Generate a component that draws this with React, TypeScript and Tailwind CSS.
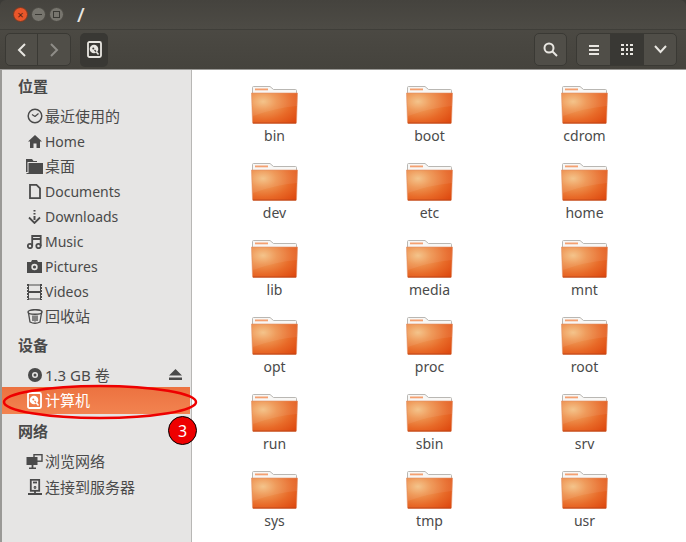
import React from "react";

const font = { fontFamily: '"Noto Sans", "Noto Sans CJK SC", sans-serif' };

const folders = [
  "bin", "boot", "cdrom",
  "dev", "etc", "home",
  "lib", "media", "mnt",
  "opt", "proc", "root",
  "run", "sbin", "srv",
  "sys", "tmp", "usr",
];

function Folder() {
  return (
    <svg width="47" height="38" viewBox="0 0 47 38">
      <path d="M1.500 10V1.500Q1.500 .5 2.500 .5H19l3.500 3H44.500Q45.500 3.500 45.500 4.500V10Z" fill="#f8f7f5" stroke="#b9b7b3" />
      <rect x="4" y="2.500" width="13" height="1.800" fill="#f4a070" />
      <path d="M0.500 7H46.500L45.500 36.500Q45.500 37.500 44.500 37.500H2.500Q1.500 37.500 1.500 36.500Z" fill="url(#folderFill)" stroke="#e3946c" strokeWidth="0.600" />
      <path d="M1 7.500H46V20Q24 22 2 30Z" fill="#ffffff" opacity="0.07" />
      <path d="M2 37H45" stroke="#b8431a" strokeWidth="0.800" />
    </svg>
  );
}

function DiskIcon({ color = "#4c4c4c", hole = "#e6e5e4" }: { color?: string; hole?: string }) {
  return (
    <svg width="15" height="17" viewBox="0 0 15 17">
      <rect x="1" y="1" width="13" height="15" rx="1.500" fill={hole} stroke={color} strokeWidth="1.800" />
      <circle cx="7" cy="8" r="4.300" fill={color} />
      <circle cx="6.300" cy="7.500" r="1" fill={hole} />
      <path d="M7.500 9L11 13" stroke={hole} strokeWidth="1.200" />
      <path d="M9 10.500l2.500 3" stroke={color} strokeWidth="1.500" />
    </svg>
  );
}

const c = "#4a4a4a";
const icons: Record<string, React.ReactNode> = {
  recent: (
    <svg width="16" height="16" viewBox="0 0 16 16" fill="none" stroke={c} strokeWidth="1.500">
      <circle cx="8" cy="8" r="6.800" />
      <path d="M8 8.500L5 6.500M8 8.500l3.500-3" strokeWidth="1.200" />
    </svg>
  ),
  home: (
    <svg width="14" height="13" viewBox="0 0 14 13" fill={c}>
      <path d="M7 0L14 6.500H12V13H8.500V8.500H5.500V13H2V6.500H0Z" />
    </svg>
  ),
  desktop: (
    <svg width="17" height="15" viewBox="0 0 17 15" fill={c}>
      <path d="M0 0H6L7.500 2H11V3H1.500V13H0Z" />
      <path d="M2.500 4H17V15H0.500V14H2.500Z" />
    </svg>
  ),
  doc: (
    <svg width="12" height="15" viewBox="0 0 12 15" fill="none" stroke={c} strokeWidth="1.800">
      <path d="M1 .9H7.500L11 4.300V14.100H1Z" />
    </svg>
  ),
  download: (
    <svg width="13" height="14" viewBox="0 0 13 14" fill="none" stroke={c} strokeWidth="2">
      <path d="M6.500 0v1.500M6.500 3v1.500M6.500 6v4" />
      <path d="M1 7.500L6.500 13 12 7.500" strokeWidth="1.800" />
    </svg>
  ),
  music: (
    <svg width="15" height="14" viewBox="0 0 15 14" fill="none" stroke={c} strokeWidth="1.800">
      <circle cx="3" cy="11" r="2.200" />
      <circle cx="11.500" cy="11" r="2.200" />
      <path d="M5.200 11V1H13.700V11M5.200 4H13.700" />
    </svg>
  ),
  camera: (
    <svg width="15" height="13" viewBox="0 0 15 13">
      <path d="M0 2H4L5 0H10L11 2H15V13H0Z" fill={c} />
      <circle cx="7.500" cy="7" r="3.200" fill="#e6e5e4" />
      <circle cx="7.500" cy="7" r="1.600" fill={c} />
    </svg>
  ),
  video: (
    <svg width="15" height="16" viewBox="0 0 15 16" fill="none" stroke={c}>
      <path d="M1.500 0V16M13.500 0V16M2 1H13M2 7.500H13M2 8.500H13M2 15H13" />
      <path d="M.5 0V16M14.500 0V16" strokeDasharray="2 1" />
    </svg>
  ),
  trash: (
    <svg width="16" height="15" viewBox="0 0 16 15" fill="none" stroke={c} strokeWidth="1.500">
      <ellipse cx="8" cy="3" rx="7" ry="2.300" />
      <path d="M1.500 4L3 13Q8 15.500 13 13L14.500 4M6 6.500V12M8 6.500V12.500M10 6.500V12" strokeWidth="1.300" />
    </svg>
  ),
  disc: (
    <svg width="14" height="14" viewBox="0 0 14 14">
      <circle cx="7" cy="7" r="7" fill={c} />
      <circle cx="7" cy="7" r="3" fill="#e6e5e4" />
      <circle cx="7" cy="7" r="1.500" fill={c} />
    </svg>
  ),
  network: (
    <svg width="17" height="15" viewBox="0 0 17 15">
      <rect x="8" y="0.700" width="8" height="6.500" fill="none" stroke={c} strokeWidth="1.400" />
      <rect x="0.500" y="3" width="11" height="8" fill={c} />
      <path d="M3 14.500H10M6.500 11V14" stroke={c} strokeWidth="1.800" />
    </svg>
  ),
  server: (
    <svg width="14" height="16" viewBox="0 0 14 16" fill="none" stroke={c} strokeWidth="1.800">
      <rect x="2.800" y="0.800" width="8.400" height="11" />
      <path d="M5 3.500H9" />
      <circle cx="7" cy="8.500" r="0.500" />
      <path d="M0 15H14M7 12V15" />
    </svg>
  ),
};

function Heading({ label, className }: { label: string; className: string }) {
  return (
    <div className={`pl-[16px] flex items-center text-[15px] font-bold text-[#4a4a4a] ${className}`}>
      {label}
    </div>
  );
}

function Place({ icon, label, className = "h-[25px] text-[14px]" }: { icon: string; label: string; className?: string }) {
  return (
    <div className={`flex items-center text-[#4a4a4a] ${className}`}>
      <span className="w-[19px] ml-[23px] mr-[1px] flex justify-center">{icons[icon]}</span>
      <span>{label}</span>
    </div>
  );
}

export default function App() {
  return (
    <div className="w-[686px] h-[542px] relative overflow-hidden flex flex-col bg-[#3c3b37]" style={font}>
      <svg width="0" height="0" className="absolute">
        <defs>
          <radialGradient id="folderFill" cx="0.25" cy="0.28" r="0.95">
            <stop offset="0" stopColor="#f4c083" />
            <stop offset="0.3" stopColor="#ee9450" />
            <stop offset="0.65" stopColor="#e86a28" />
            <stop offset="1" stopColor="#de4a10" />
          </radialGradient>
        </defs>
      </svg>

      <div className="h-[29px] shrink-0 flex items-center pl-[13px] rounded-t-md bg-gradient-to-b from-[#45433e] to-[#4d4b45]">
        <span className="w-[15px] h-[15px] rounded-full bg-[#e9562a] border border-[#7a3a22] flex items-center justify-center text-[11px] leading-none text-[#5a2010]">×</span>
        <span className="w-[15px] h-[15px] ml-[3px] rounded-full bg-[#77756e] border border-[#4a4842] flex items-center justify-center">
          <span className="w-[7px] h-[1.500px] bg-[#3a3934]" />
        </span>
        <span className="w-[15px] h-[15px] ml-[3px] rounded-full bg-[#77756e] border border-[#4a4842] flex items-center justify-center">
          <span className="w-[7px] h-[7px] border border-[#3a3934]" />
        </span>
        <span className="ml-[13px] text-[20px] leading-none font-medium text-[#e8e6e1]">/</span>
      </div>

      <div className="h-[40px] shrink-0 flex items-center px-[5px] border-t border-[#3f3e39] bg-gradient-to-b from-[#4b4943] to-[#45433d]">
        <div className="w-[66px] h-[33px] flex rounded-[5px] border border-[#3a3934] bg-[#504e48]">
          <span className="w-[32px] flex items-center justify-center border-r border-[#3a3934]">
            <svg width="12" height="14" viewBox="0 0 12 14" fill="none" stroke="#e8e6e1" strokeWidth="2"><path d="M9 1L3 7l6 6" /></svg>
          </span>
          <span className="flex-1 flex items-center justify-center">
            <svg width="12" height="14" viewBox="0 0 12 14" fill="none" stroke="#8f8d88" strokeWidth="2"><path d="M3 1l6 6-6 6" /></svg>
          </span>
        </div>
        <div className="w-[28px] h-[34px] ml-[9px] rounded-[5px] bg-[#393834] flex items-center justify-center">
          <DiskIcon color="#e8e6e1" hole="#393834" />
        </div>
        <div className="w-[33px] h-[33px] ml-auto rounded-[5px] border border-[#3a3934] bg-[#504e48] flex items-center justify-center">
          <svg width="15" height="15" viewBox="0 0 15 15" fill="none" stroke="#e8e6e1" strokeWidth="2"><circle cx="6" cy="6" r="4.500" /><path d="M9.500 9.500L14 14" /></svg>
        </div>
        <div className="w-[101px] h-[33px] ml-[9px] mr-[4px] flex rounded-[5px] border border-[#3a3934] bg-[#504e48] overflow-hidden">
          <span className="w-[33px] flex items-center justify-center">
            <span className="w-[10px] h-[10px] border-y-2 border-[#e8e6e1] flex items-center"><span className="w-full h-[2px] bg-[#e8e6e1]" /></span>
          </span>
          <span className="w-[34px] bg-[#393834] grid grid-cols-[3px_3px_3px] auto-rows-[3px] gap-[1.500px] place-content-center">
            {Array.from({ length: 9 }).map((_, i) => (
              <span key={i} className="w-[2.500px] h-[2.500px] bg-[#e8e6e1]" />
            ))}
          </span>
          <span className="flex-1 flex items-center justify-center">
            <svg width="13" height="9" viewBox="0 0 13 9" fill="none" stroke="#e8e6e1" strokeWidth="2"><path d="M1 1l5.500 6L12 1" /></svg>
          </span>
        </div>
      </div>

      <div className="flex-1 flex border-t border-b border-t-[#9a9996] border-b-[#9a9996] border-l-2 border-l-[#9a9996] bg-white">
        <div className="w-[190px] shrink-0 bg-[#e6e5e4] border-r border-[#b8b7b5] flex flex-col">
          <Heading label="位置" className="h-[32px]" />
          <Place icon="recent" label="最近使用的" className="h-[26px] mt-[1px] text-[15px]" />
          <Place icon="home" label="Home" />
          <Place icon="desktop" label="桌面" className="h-[25px] text-[15px]" />
          <Place icon="doc" label="Documents" />
          <Place icon="download" label="Downloads" />
          <Place icon="music" label="Music" />
          <Place icon="camera" label="Pictures" />
          <Place icon="video" label="Videos" />
          <Place icon="trash" label="回收站" className="h-[25px] text-[15px]" />
          <Heading label="设备" className="h-[32px]" />
          <div className="flex items-center pr-[9px]">
            <Place icon="disc" label="1.3 GB 卷" className="h-[26px] pt-[2px] flex-1 text-[15px]" />
            <svg width="13" height="11" viewBox="0 0 13 11" fill={c}><path d="M6.500 0L13 6.500H0ZM0 8.500H13V11H0Z" /></svg>
          </div>
          <div className="h-[27px] mr-[1px] flex items-center text-[15px] text-white bg-gradient-to-b from-[#ec7240] to-[#f28350]">
            <span className="w-[19px] ml-[23px] mr-[1px] flex justify-center"><DiskIcon color="#ffffff" hole="#ef7a48" /></span>
            <span>计算机</span>
          </div>
          <Heading label="网络" className="h-[34px]" />
          <Place icon="network" label="浏览网络" className="h-[26px] text-[15px]" />
          <Place icon="server" label="连接到服务器" className="h-[26px] text-[15px]" />
        </div>

        <div className="flex-1 pl-[5px] pt-[16px] grid grid-cols-[155px_155px_155px] auto-rows-[77px]">
          {folders.map((name) => (
            <div key={name} className="flex flex-col items-center">
              <Folder />
              <span className="mt-[2px] text-[14px] leading-[20px] text-[#4a4a4a]">{name}</span>
            </div>
          ))}
        </div>
      </div>

      {/* red annotation drawn on top of the screenshot */}
      <svg width="200" height="40" viewBox="0 0 200 40" fill="none" className="absolute left-0 top-[383px]">
        <ellipse cx="100" cy="19" rx="96" ry="16" stroke="#ee0000" strokeWidth="2.500" />
      </svg>
      <div className="absolute left-[168px] top-[416px] w-[29px] h-[29px] rounded-full bg-[#ee0000] border border-black flex items-center justify-center text-[16px] text-white">3</div>
    </div>
  );
}
